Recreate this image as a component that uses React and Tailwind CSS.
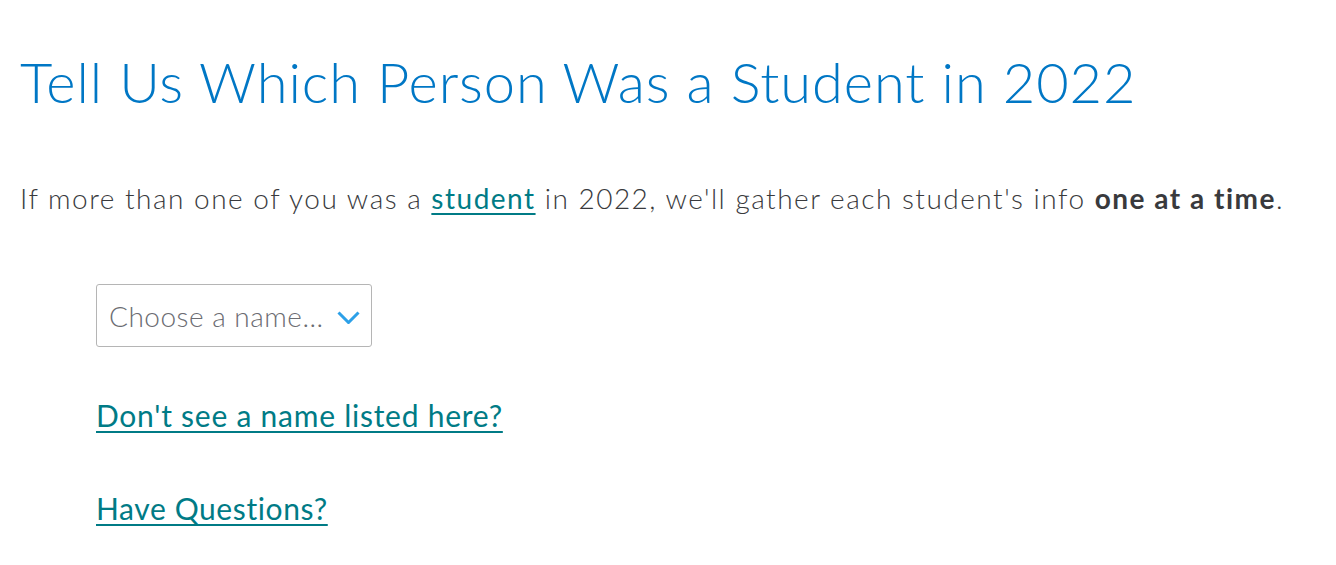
import React from "react";

const App = () => {
  return (
    <div className="min-h-screen bg-white font-['Lato',sans-serif] text-[#393a3d]">
      <div className="pl-5 pt-[46px]">
        {/* HEADING */}
        <h1 className="text-[56px] leading-[72px] font-light text-[#0077c5] tracking-[0.92px]">
          Tell Us Which Person Was a Student in 2022
        </h1>

        {/* INTRO */}
        <p className="mt-[62px] text-[28px] leading-[36px] font-light tracking-[1.5px]">
          If more than one of you was a{" "}
          <a href="#" className="text-[#007b86] underline decoration-2 underline-offset-4 font-normal">
            student
          </a>{" "}
          in 2022, we'll gather each student's info{" "}
          <span className="font-bold">one at a time</span>.
        </p>

        {/* SELECT + LINKS */}
        <div className="pl-[76px] mt-[68px] flex flex-col items-start">
          <div className="w-[276px] h-[63px] border border-[#b5b5b5] rounded-[3px] flex items-center justify-between pl-[12px] pr-[11px]">
            <span className="text-[28px] font-light tracking-[0.5px] text-[#6b6c72]">Choose a name...</span>
            <svg width="23" height="13" viewBox="0 0 23 13" fill="none" className="mt-[4px]">
              <path d="M1.5 1.5l10 10 10-10" stroke="#2ca0e8" strokeWidth="3" />
            </svg>
          </div>

          <a href="#" className="mt-[50px] text-[30px] leading-[36px] tracking-[0.75px] text-[#007b86] underline decoration-2 underline-offset-4">
            Don't see a name listed here?
          </a>

          <a href="#" className="mt-[57px] text-[30px] leading-[36px] tracking-[0.6px] text-[#007b86] underline decoration-2 underline-offset-4">
            Have Questions?
          </a>
        </div>
      </div>
    </div>
  );
};

export default App;
